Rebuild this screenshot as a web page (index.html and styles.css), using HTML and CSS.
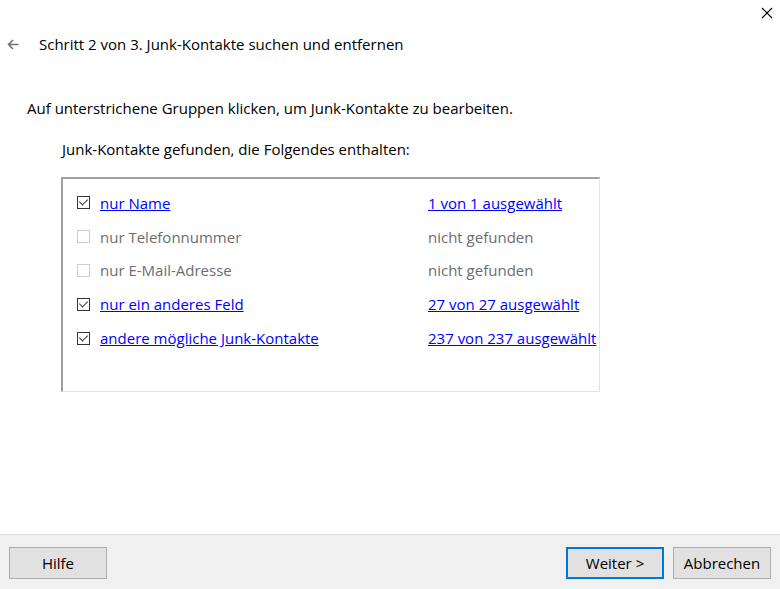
FILE: index.html
```html
<!DOCTYPE html>
<html lang="de">
<head>
    <meta charset="UTF-8" />
    <title>Junk-Kontakte</title>
    <link rel="stylesheet" href="styles.css">
</head>
<body>
    <div class="window">
        <div class="titlebar">
            <span class="close">
                <svg width="12" height="12" viewBox="0 0 12 12"><path d="M1 1L11 11M11 1L1 11" stroke="#000" stroke-width="1.1" fill="none"/></svg>
            </span>
        </div>
        <div class="header">
            <span class="back">
                <svg width="12" height="11" viewBox="0 0 12 11"><path d="M11.5 5.5H1.5M6 1L1.5 5.5L6 10" stroke="#707070" stroke-width="1.5" fill="none"/></svg>
            </span>
            <h1>Schritt 2 von 3. Junk-Kontakte suchen und entfernen</h1>
        </div>
        <div class="content">
            <p class="intro">Auf unterstrichene Gruppen klicken, um Junk-Kontakte zu bearbeiten.</p>
            <p class="sub">Junk-Kontakte gefunden, die Folgendes enthalten:</p>
            <div class="listbox">
                <div class="row">
                    <span class="check on"></span>
                    <a class="label" href="#">nur Name</a>
                    <a class="count" href="#">1 von 1 ausgewählt</a>
                </div>
                <div class="row disabled">
                    <span class="check"></span>
                    <span class="label">nur Telefonnummer</span>
                    <span class="count">nicht gefunden</span>
                </div>
                <div class="row disabled">
                    <span class="check"></span>
                    <span class="label">nur E-Mail-Adresse</span>
                    <span class="count">nicht gefunden</span>
                </div>
                <div class="row">
                    <span class="check on"></span>
                    <a class="label" href="#">nur ein anderes Feld</a>
                    <a class="count" href="#">27 von 27 ausgewählt</a>
                </div>
                <div class="row">
                    <span class="check on"></span>
                    <a class="label" href="#">andere mögliche Junk-Kontakte</a>
                    <a class="count" href="#">237 von 237 ausgewählt</a>
                </div>
            </div>
        </div>
        <div class="footer">
            <button class="btn">Hilfe</button>
            <div class="right">
                <button class="btn primary">Weiter &gt;</button>
                <button class="btn">Abbrechen</button>
            </div>
        </div>
    </div>
</body>
</html>
```

FILE: styles.css
```css
* {
    margin: 0;
    padding: 0;
    box-sizing: border-box;
}
body {
    font-family: 'Open Sans', 'Noto Sans', sans-serif;
    font-size: 15px;
    color: #000;
    background-color: #fff;
}
.window {
    width: 780px;
    height: 589px;
    display: flex;
    flex-direction: column;
}
.titlebar {
    height: 30px;
    display: flex;
    justify-content: flex-end;
}
.close {
    width: 26px;
    height: 30px;
    display: flex;
    align-items: center;
    justify-content: center;
    margin-top: -2px;
}
.header {
    display: flex;
    align-items: center;
    height: 28px;
}
.back {
    width: 39px;
    padding-left: 7px;
    display: flex;
    align-items: center;
}
.header h1 {
    font-size: 15px;
    font-weight: normal;
}
.content {
    flex: 1;
    padding-top: 40px;
}
.intro {
    padding-left: 27px;
    line-height: 20px;
}
.sub {
    padding-left: 62px;
    margin-top: 21px;
    line-height: 20px;
}
.listbox {
    margin: 18px 0 0 61px;
    width: 539px;
    height: 215px;
    border-top: 2px solid #a0a0a0;
    border-left: 2px solid #a0a0a0;
    border-right: 1px solid #e3e3e3;
    border-bottom: 1px solid #e3e3e3;
    padding-top: 7px;
}
.row {
    display: flex;
    align-items: center;
    height: 33.8px;
}
.check {
    width: 13px;
    height: 13px;
    border: 1px solid #333;
    margin-left: 14px;
    margin-right: 10px;
    position: relative;
}
.check.on::after {
    content: "";
    position: absolute;
    left: 3px;
    top: 0px;
    width: 4px;
    height: 7px;
    border-right: 1px solid #333;
    border-bottom: 1px solid #333;
    transform: rotate(45deg);
}
.disabled .check {
    border-color: #ccc;
}
.label {
    width: 328px;
    white-space: nowrap;
}
.count {
    white-space: nowrap;
}
a {
    color: #0000ff;
    text-decoration: underline;
}
.disabled {
    color: #6d6d6d;
}
.footer {
    height: 55px;
    background-color: #f0f0f0;
    border-top: 1px solid #dfdfdf;
    display: flex;
    justify-content: space-between;
    align-items: flex-start;
    padding: 12px 9px 0 9px;
}
.right {
    display: flex;
    gap: 9px;
}
.btn {
    width: 98px;
    height: 32px;
    background-color: #e1e1e1;
    border: 1px solid #adadad;
    font-family: inherit;
    font-size: 15px;
    line-height: 28px;
    color: #000;
}
.btn.primary {
    border: 2px solid #0078d7;
}
```
